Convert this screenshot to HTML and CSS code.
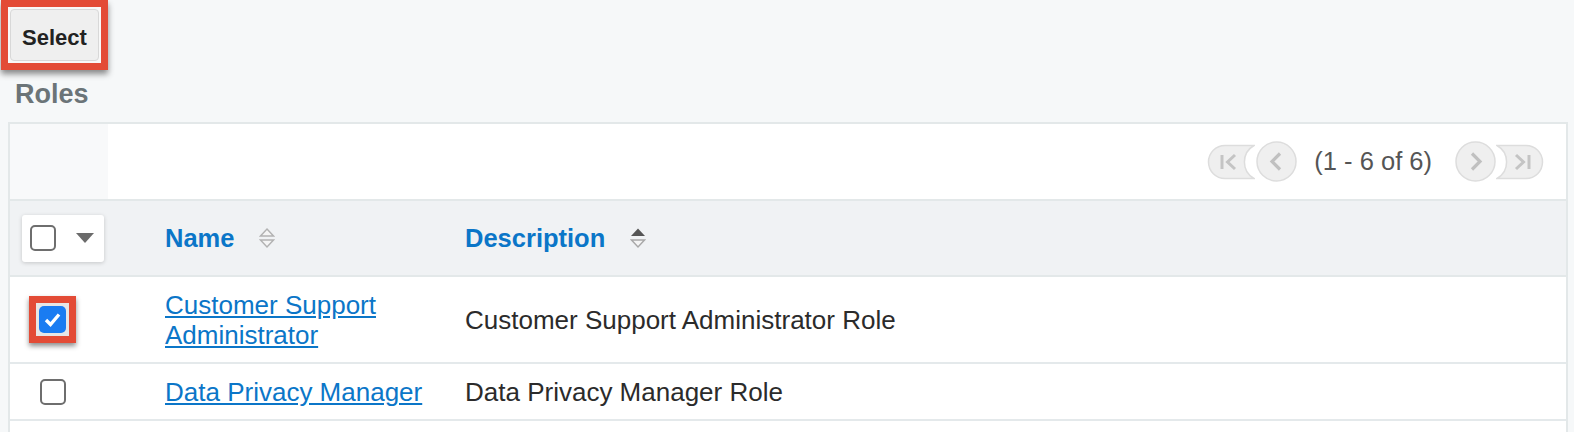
FILE: index.html
```html
<!DOCTYPE html>
<html lang="en">
<head>
    <meta charset="UTF-8">
    <meta name="viewport" content="width=device-width, initial-scale=1.0">
    <title>Roles</title>
    <link rel="stylesheet" href="styles.css">
</head>
<body>
    <div class="select-frame">
        <button class="btn-select" type="button">Select</button>
    </div>

    <h2 class="title">Roles</h2>

    <div class="list">
        <div class="list-top">
            <div class="list-top-side"></div>
            <div class="pager">
                <svg class="pg-end" width="48" height="36" viewBox="0 0 48 36">
                    <path d="M18 1.5 H47 A19 19 0 0 0 47 34.5 H18 A16.5 16.5 0 0 1 18 1.5 Z" fill="#efefef" stroke="#dddddd" stroke-width="1.5"/>
                    <path d="M15 11 V25" stroke="#c4c4c4" stroke-width="3"/>
                    <path d="M28 11 L20.5 18 L28 25" fill="none" stroke="#c4c4c4" stroke-width="3"/>
                </svg>
                <svg class="pg-step" width="41" height="41" viewBox="0 0 41 41">
                    <circle cx="20.5" cy="20.5" r="19.5" fill="#efefef" stroke="#dddddd" stroke-width="1.5"/>
                    <path d="M24 12.5 L16 20.5 L24 28.5" fill="none" stroke="#c0c0c0" stroke-width="3.2"/>
                </svg>
                <span class="pg-count">(1 - 6 of 6)</span>
                <svg class="pg-step" width="41" height="41" viewBox="0 0 41 41">
                    <circle cx="20.5" cy="20.5" r="19.5" fill="#efefef" stroke="#dddddd" stroke-width="1.5"/>
                    <path d="M17 12.5 L25 20.5 L17 28.5" fill="none" stroke="#c0c0c0" stroke-width="3.2"/>
                </svg>
                <svg class="pg-end" width="48" height="36" viewBox="0 0 48 36">
                    <path d="M30 1.5 H1 A19 19 0 0 1 1 34.5 H30 A16.5 16.5 0 0 0 30 1.5 Z" fill="#efefef" stroke="#dddddd" stroke-width="1.5"/>
                    <path d="M33 11 V25" stroke="#c4c4c4" stroke-width="3"/>
                    <path d="M20 11 L27.5 18 L20 25" fill="none" stroke="#c4c4c4" stroke-width="3"/>
                </svg>
            </div>
        </div>

        <table class="grid">
            <colgroup>
                <col class="col-check">
                <col class="col-name">
                <col>
            </colgroup>
            <thead>
                <tr>
                    <th>
                        <div class="mass-select">
                            <span class="box"></span>
                            <svg width="18" height="10" viewBox="0 0 18 10"><polygon points="0,0 18,0 9,10" fill="#6b6b6b"/></svg>
                        </div>
                    </th>
                    <th>
                        <span class="th-label">Name</span>
                        <svg class="sort" width="16" height="22" viewBox="0 0 16 22">
                            <polygon points="8,2 14.5,9 1.5,9" fill="#f4f4f4" stroke="#b2b2b2" stroke-width="1.4"/>
                            <polygon points="1.5,13 14.5,13 8,20" fill="#f4f4f4" stroke="#b2b2b2" stroke-width="1.4"/>
                        </svg>
                    </th>
                    <th>
                        <span class="th-label">Description</span>
                        <svg class="sort" width="16" height="22" viewBox="0 0 16 22">
                            <polygon points="8,1.5 15,9 1,9" fill="#555555"/>
                            <polygon points="1.5,13 14.5,13 8,20" fill="#f4f4f4" stroke="#a8a8a8" stroke-width="1.4"/>
                        </svg>
                    </th>
                </tr>
            </thead>
            <tbody>
                <tr>
                    <td>
                        <div class="mark-frame">
                            <span class="box checked">
                                <svg width="27" height="27" viewBox="0 0 27 27"><path d="M7 14 L11.5 18.5 L20 8.5" fill="none" stroke="#ffffff" stroke-width="3.4"/></svg>
                            </span>
                        </div>
                    </td>
                    <td><a href="#">Customer Support Administrator</a></td>
                    <td>Customer Support Administrator Role</td>
                </tr>
                <tr>
                    <td><span class="box row-box"></span></td>
                    <td><a href="#">Data Privacy Manager</a></td>
                    <td>Data Privacy Manager Role</td>
                </tr>
            </tbody>
        </table>
    </div>
</body>
</html>
```

FILE: styles.css
```css
body {
    margin: 0;
    background-color: #f6f8f9;
    font-family: "Liberation Sans", Arial, sans-serif;
    color: #2b2b2b;
}

.select-frame {
    display: inline-block;
    margin-left: 1px;
    padding: 2px;
    border: 7px solid #e34b36;
    background-color: #f8f8f8;
    box-shadow: 0 4px 6px rgba(0, 0, 0, 0.45);
}

.btn-select {
    display: block;
    width: 89px;
    height: 52px;
    padding: 5px 0 0 0;
    font-family: "Liberation Sans", Arial, sans-serif;
    font-size: 22px;
    font-weight: bold;
    color: #222;
    background-color: #efefef;
    border: 1px solid #d8d8d8;
    border-radius: 4px;
}

.title {
    margin: 8px 0 12px 15px;
    font-size: 27px;
    line-height: 32px;
    color: #6b7478;
}

.list {
    margin: 0 6px 0 8px;
    min-height: 330px;
    background-color: #fff;
    border: 2px solid #e3e8e9;
    border-bottom: none;
}

.list-top {
    display: flex;
    height: 75px;
    border-bottom: 2px solid #e3e8e9;
}

.list-top-side {
    width: 98px;
    background-color: #f8f9fa;
}

.pager {
    flex: 1;
    display: flex;
    align-items: center;
    justify-content: flex-end;
    padding-right: 22px;
}

.pg-step {
    margin-left: 1px;
}

.pg-count {
    margin: 0 22px 0 17px;
    font-size: 25.5px;
    color: #555;
}

.grid {
    width: 100%;
    border-collapse: collapse;
    table-layout: fixed;
}

.col-check {
    width: 139px;
}

.col-name {
    width: 300px;
}

.grid th {
    height: 74px;
    padding: 0 16px;
    text-align: left;
    background-color: #f0f2f4;
    border-bottom: 2px solid #e3e8e9;
}

.grid th:first-child,
.grid td:first-child {
    padding: 0;
}

.grid td {
    padding: 13px 16px 12px;
    font-size: 26px;
    line-height: 30px;
    border-bottom: 2px solid #e4e9eb;
}

.th-label {
    font-size: 25.5px;
    font-weight: bold;
    color: #0b76c8;
    vertical-align: middle;
}

.sort {
    margin-left: 20px;
    vertical-align: middle;
}

.grid a {
    color: #0b76c8;
}

.box {
    display: inline-block;
    box-sizing: border-box;
    width: 26px;
    height: 26px;
    border: 2px solid #6e6e6e;
    border-radius: 5px;
    background-color: #fff;
    vertical-align: middle;
}

.mass-select {
    display: flex;
    align-items: center;
    gap: 20px;
    width: 82px;
    height: 47px;
    box-sizing: border-box;
    margin-left: 12px;
    padding-left: 8px;
    background-color: #fff;
    border-radius: 3px;
    box-shadow: 0 1px 4px rgba(0, 0, 0, 0.18);
}

.row-box {
    display: block;
    margin-left: 30px;
}

.mark-frame {
    display: inline-block;
    margin-left: 19px;
    padding: 3px;
    border: 7px solid #e34b36;
    background-color: #e6e6e6;
    box-shadow: 0 3px 5px rgba(0, 0, 0, 0.45);
    vertical-align: middle;
}

.box.checked {
    display: block;
    width: 27px;
    height: 27px;
    border: none;
    background-color: #1a7cf2;
}

.box.checked svg {
    display: block;
}
```
